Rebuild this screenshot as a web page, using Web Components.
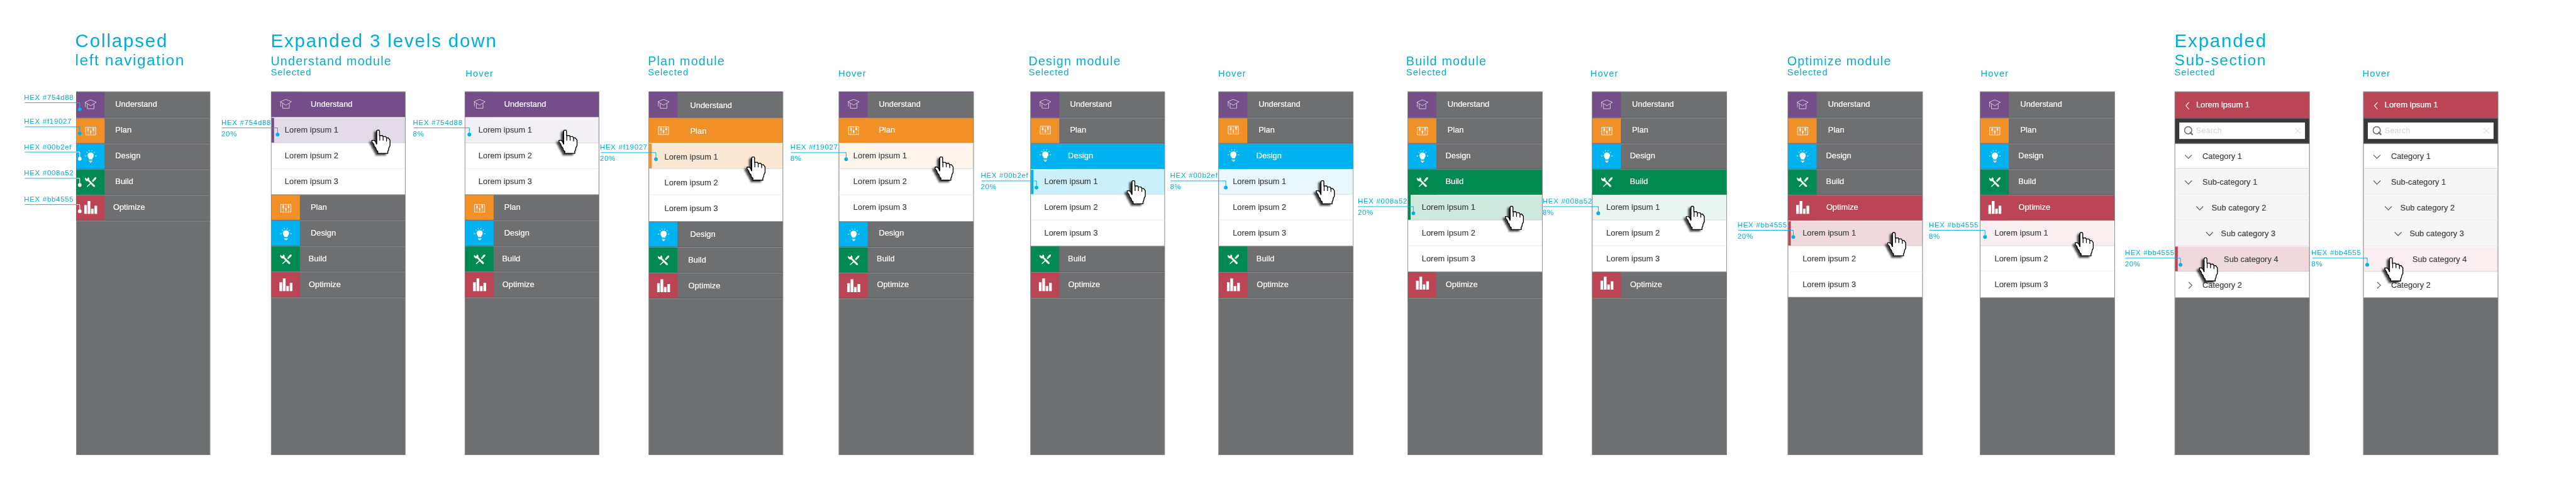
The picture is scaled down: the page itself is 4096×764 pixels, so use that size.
<!DOCTYPE html>
<html lang="en">
<head>
<meta charset="utf-8">
<title>Left navigation states</title>
<style>
  html, body { margin: 0; background: #fff; overflow: hidden; }
  body { width: 4096px; height: 764px; font-family: "Liberation Sans", Arial, Helvetica, sans-serif; }
</style>
</head>
<body>
<spec-board></spec-board>
<script>
const COLORS = { Understand: '#754d88', Plan: '#f19027', Design: '#00b2ef', Build: '#008a52', Optimize: '#bb4555' };
const MODULES = Object.keys(COLORS);

const ICONS = {
  Understand: ['104 70 70 58', '<g fill="none" stroke="#fff" stroke-opacity=".9" stroke-width="2.8"><path d="M107 87 139.500 73 172 87 139.500 107Z"/><path d="M120.500 97V125H159.500V97"/><path d="M109.500 89V115" stroke-width="4" stroke-opacity=".6"/></g>'],
  Plan: ['107 227 66 52', '<g fill="none" stroke="#fff"><path d="M109.500 230.500H169.500V276.500H109.500Z" stroke-width="3.400"/><path d="M125 231V276M140 231V276M155 231V276" stroke-width="2.4" stroke-opacity=".85"/><path d="M117 231V276M163 231V276" stroke-width="2" stroke-opacity=".3"/></g><path fill="#fff" d="M120 238h10v6h-10zM120 246h10v6h-10zM135 252h10v6h-10zM135 260h10v6h-10zM150 236h10v6h-10zM150 244h10v6h-10z"/>'],
  Design: ['103 364 72 76', '<g fill="#fff"><path d="M139 380c-11 0-18 8-18 18 0 9 8 12 9 22h18c1-10 9-13 9-22 0-10-7-18-18-18z"/><path d="M129 428h20v4h-20zM132 434h14l-4 5h-6z"/></g><path d="M105 400h9M164 400h9M116 376l5 7M162 376l-5 7M129 367l2 7M147 367l-2 7" stroke="#fff" stroke-width="3.400"/>'],
  Build: ['103 518 72 64', '<path d="M107 524l7 7 8-1 1-8c8 2 11 9 8 16l32 31c5 6-3 13-9 8l-30-32c-8 2-18-4-19-14z" fill="#fff"/><path d="M116 580l4-8 20-19 4 4-20 18z" fill="#fff"/><path d="M146 544l16-20 10-2-1 10-18 18z" fill="#fff"/><path d="M151 545l15-17" stroke="#008a52" stroke-opacity=".5" stroke-width="2"/>'],
  Optimize: ['101 659 78 78', '<path fill="#fff" d="M102 684h16v52h-16zM122 661h16v75h-16zM142 706h15v30h-15zM162 688h16v48h-16z"/>']
};

function define(name, css, build) {
  customElements.define(name, class extends HTMLElement {
    constructor() {
      super();
      this.attachShadow({ mode: 'open' });
    }
    connectedCallback() {
      const host = this;
      const attr = (key, fallback) => host.hasAttribute(key) ? host.getAttribute(key) : fallback;
      this.shadowRoot.innerHTML = `<style>${css}</style>${build(attr)}`;
    }
  });
}

/* Glyph used in a module's coloured square */
define('module-icon', `
  :host { display: block; }
  svg { display: block; }
`, a => {
  const [box, body] = ICONS[a('name')];
  const [, , w, h] = box.split(' ').map(Number);
  return `<svg viewBox="${box}" width="${w / 3}" height="${h / 3}">${body}</svg>`;
});

/* Top level entry: coloured square with icon, label on the right */
define('module-row', `
  :host { display: block; box-sizing: border-box; height: var(--h); border-top: 1px solid #929395; border-bottom: 1px solid #505153; background: #6e6f71; color: #fff; }
  :host([plain]) { border-top-color: var(--tint); }
  :host([open]) { background: var(--tint); border-bottom-color: #929395; }
  .row { display: flex; height: 100%; }
  .cell { width: 55px; height: 100%; background: var(--tint); flex: none; display: flex; justify-content: center; }
  module-icon { margin-top: var(--iy); margin-left: 1px; height: 0; }
  .label { margin-left: var(--lx); margin-top: var(--ly); height: 0; line-height: 50px; font-size: 15.6px; letter-spacing: .05px; -webkit-text-stroke: .25px currentColor; white-space: nowrap; }
`, a => `<div class="row"><div class="cell"><module-icon name="${a('icon')}"></module-icon></div><div class="label"><slot></slot></div></div>`);

/* Second level entry */
define('sub-row', `
  :host { display: block; box-sizing: border-box; height: var(--h); border-top: 1px solid #fff; border-bottom: 1px solid var(--rule, #fff); background: var(--bg, #fff); color: #3c3d42; }
  .row { display: flex; height: 100%; }
  .bar { width: 5px; flex: none; background: var(--bar, transparent); margin-top: var(--rise, 0px); }
  .mark { margin-left: var(--mx, 0px); width: 0; margin-top: var(--my, 0px); }
  svg { display: block; overflow: visible; }
  .label { margin-left: var(--lx); margin-top: var(--ly); height: 0; line-height: 50px; font-size: 15.6px; letter-spacing: .05px; -webkit-text-stroke: .2px currentColor; white-space: nowrap; }
`, a => {
  const mark = a('mark', '');
  const path = mark === 'down' ? 'M0 0L6.700 6.800L13.300 0' : mark === 'right' ? 'M0 0L6.500 6.300L0 12.600' : '';
  return `<div class="row"><div class="bar"></div><div class="mark">${path ? `<svg width="14" height="14"><path d="${path}" fill="none" stroke="#606163" stroke-width="1.500"/></svg>` : ''}</div><div class="label"><slot></slot></div></div>`;
});

define('back-row', `
  :host { display: block; box-sizing: border-box; height: 51px; background: #bb4555; border-top: 1px solid #929395; border-bottom: 1px solid #86404a; color: #fff; }
  .row { display: flex; }
  svg { display: block; margin: 18.5px 13.6px 0 19.5px; width: 7.500px; height: 15px; }
  .label { line-height: 50px; font-size: 15.6px; letter-spacing: .05px; -webkit-text-stroke: .3px currentColor; height: 48px; }
`, () => `<div class="row"><svg viewBox="0 0 7.500 15"><path d="M7 .400L.900 7.500L7 14.600" fill="none" stroke="#fff" stroke-width="1.400"/></svg><div class="label"><slot></slot></div></div>`);

define('search-row', `
  :host { display: block; box-sizing: border-box; height: 51px; background: #383838; border-top: 1px solid #929395; border-bottom: 2px solid #7c7d7f; padding: 8px 8px 0; }
  .field { height: 32px; background: #fff; display: flex; align-items: center; }
  .glass { margin-left: 9px; width: 18px; height: 18px; }
  .hint { margin-left: 5.500px; font-size: 15.6px; letter-spacing: .05px; color: #d5d6d9; flex: 1; line-height: 32px; }
  .clear { width: 12px; height: 12px; margin-right: 8px; }
`, () => `<div class="field"><svg class="glass" viewBox="0 0 18 18"><circle cx="8.200" cy="8.200" r="7" fill="none" stroke="#6e6f71" stroke-width="2"/><path d="M11.500 11.500L17 17" stroke="#6e6f71" stroke-width="2.800"/></svg><span class="hint"><slot></slot></span><svg class="clear" viewBox="0 0 12 12"><path d="M.300 .300L11.700 11.700M11.700 .300L.300 11.700" stroke="#cfd0d3" stroke-width="1.200"/></svg></div>`);

/* Panel frame; the remaining height is plain grey */
define('nav-panel', `
  :host { display: flex; flex-direction: column; box-sizing: border-box; width: 100%; height: 706px; background: #6e6f71; border: solid #929395; border-width: 0 1px 0 1px; }
  :host([borderless]) { border-left: 0; }
  .rest { flex: 1; border-top: 1px solid #929395; }
`, () => `<slot></slot><div class="rest"></div>`);

/* Title, module name and state above a panel */
define('board-heading', `
  :host { display: flex; flex-direction: column; box-sizing: border-box; height: 178px; padding-top: 58.500px; margin-left: var(--hx); color: #00aedb; white-space: nowrap; width: 0; }
  .title { height: 41.200px; font-size: 36px; line-height: 40px; letter-spacing: 2.250px; }
  .sub { height: 31.700px; font-size: 24px; line-height: 38px; letter-spacing: 1.500px; }
  :host([large]) .sub { font-size: 30px; line-height: 34px; letter-spacing: 1.850px; }
  .state { font-size: 18px; line-height: 20px; letter-spacing: 1.150px; }
  .state.hover { padding-top: 1.400px; letter-spacing: 1.300px; }
`, a => `<div class="title">${a('title-text', '')}</div><div class="sub">${a('sub', '')}</div><div class="state ${a('state') === 'Hover' ? 'hover' : ''}">${a('state', '')}</div>`);

/* Colour annotation: text over a leader line that ends in a dot */
define('color-note', `
  :host { position: absolute; left: var(--x); top: var(--y); width: var(--w); color: #00aedb; font-size: 14px; line-height: 16px; letter-spacing: .86px; white-space: nowrap; }
  .hex { height: 18.300px; }
  .lead { display: block; height: 1px; overflow: visible; margin-left: 1px; }
  .pct { margin-top: 3.200px; }
`, a => {
  const w = +a('w') - 1, split = a('split') ? +a('split') : 0;
  const end = split ? '#fff' : '#00b2ef';
  return `<div class="hex">${a('hex')}</div><svg class="lead" width="${w}" height="1">
    <path d="M0 .500H${split || w}" stroke="#00b2ef" stroke-width="1.200"/>
    <path d="M${split || w - 1} .500H${w}V13" stroke="${end}" stroke-width="1.200" fill="none"/>
    <circle cx="${w}" cy="13.500" r="3.600" fill="${end}"/></svg><div class="pct">${a('pct', '')}</div>`;
});

define('hand-cursor', `
  :host { position: absolute; left: var(--x); top: var(--y); }
  svg { display: block; overflow: visible; filter: drop-shadow(-3.500px 3px 2.200px rgba(0,0,0,.75)); }
`, () => `<svg viewBox="63 36 112 144" width="37.300" height="48"><path d="M97 39H107L110 44V70H127L130 76H146L151 84H161L171 97V130L165 140L162 156L158 162V174H100V162L92 156L88 142L80 134L76 120L66 108V98H78L86 104L93 120V44Z" fill="#fff" stroke="#000" stroke-width="5"/><path d="M93 44V122M111.500 68V99M131 76V99M151 84V104" stroke="#000" stroke-width="4.600" fill="none"/></svg>`);

const BOARDS = [
  { x: 148, r: 408, hx: -2, title: 'Collapsed', sub: 'left navigation', large: 1, lx: 77, bx: 77, ox: 72.500, h: [51, 50, 50, 50, 50], icons: [203, 254.5, 304, 353.500, 402.500], borderless: 1,
    notes: [['#754d88', 199], ['#f19027', 246], ['#00b2ef', 295, 1], ['#008a52', 346, 1], ['#bb4555', 397, 1]], nx: 46.700, ne: 154.500 },
  { x: 526, r: 787, hx: -.6, title: 'Expanded 3 levels down', sub: 'Understand module', open: 0, state: 'Selected', lx: 78.300, short: 3, sx: 28, h: [50, 50, 50, 50, 50, 50, 50, 50], icons: [202, 404.500, 454.300, 504, 552.500], bg: '#e3dce8', nx: 429.700, ne: 538.500, ny: 248, cur: [734, 252] },
  { x: 902, r: 1163, hx: 1.700, open: 0, state: 'Hover', lx: 78, short: 3, sx: 28, h: [50, 50, 50, 50, 50, 50, 50, 50], icons: [202, 404.500, 454.300, 504, 552.500], bg: '#f2f0f5', nx: 801.500, ne: 910.500, ny: 248, cur: [1097, 252] },
  { x: 1258.500, r: 1519.500, hx: -1, sub: 'Plan module', open: 1, state: 'Selected', lx: 82.500, short: 3, sx: 32.500, dy: 2, plain: 1, h: [51, 49, 50, 51, 51, 50, 50, 50], icons: [202, 253.200, 456, 505.700, 554.600], bg: '#fbe8d3', nx: 1164.500, ne: 1272.700, ny: 296, cur: [1462, 304] },
  { x: 1628, r: 1890, hx: -.7, open: 1, state: 'Hover', lx: 79, short: 3, sx: 29.500, plain: 1, h: [51, 49, 50, 51, 51, 50, 50, 50], icons: [202, 253.200, 456, 505.700, 554.600], bg: '#fef5ed', nx: 1534, ne: 1642.300, ny: 296, cur: [1826.600, 304] },
  { x: 1999.500, r: 2261, hx: -3, sub: 'Design module', open: 2, state: 'Selected', lx: 78.600, short: 2, sx: 28.700, h: [51, 50, 50, 49, 50, 50, 51, 50], icons: [201.200, 252.500, 302, 503.600, 552.500], bg: '#ccf0fc', nx: 1903.700, ne: 2011.500, ny: 351, cur: [2200, 350] },
  { x: 2365, r: 2627, hx: -.5, open: 2, state: 'Hover', lx: 79, short: 2, sx: 29, h: [51, 50, 50, 49, 50, 50, 51, 50], icons: [201.200, 252.500, 302, 503.600, 552.500], bg: '#eaf8fe', nx: 2271.200, ne: 2379.500, ny: 351, cur: [2567, 350] },
  { x: 2732, r: 2994, hx: -2.700, sub: 'Build module', open: 3, state: 'Selected', lx: 79, short: 2, sx: 29, h: [51, 50, 50, 50, 49, 50, 50, 51], icons: [203, 254.300, 304, 353.300, 550], bg: '#cde8dd', nx: 2635.400, ne: 2743.700, ny: 401, cur: [2934, 400] },
  { x: 3090, r: 3352, hx: -3, open: 3, state: 'Hover', lx: 79, short: 2, sx: 29, h: [51, 50, 50, 50, 49, 50, 50, 51], icons: [203, 254.300, 304, 353.300, 550], bg: '#eaf4f0', nx: 2994.200, ne: 3102.500, ny: 401, cur: [3284.600, 400] },
  { x: 3470, r: 3732, hx: -1.200, sub: 'Optimize module', open: 4, state: 'Selected', lx: 79.600, short: 2, sx: 30, h: [51, 50, 50, 50, 50, 49, 50, 49], icons: [203, 254.300, 304, 353.500, 402.500], bg: '#f0d9dc', rule2: '#fff', nx: 3372.500, ne: 3480.300, ny: 447, cur: [3676, 451] },
  { x: 3843, r: 4105, hx: 1.700, open: 4, state: 'Hover', lx: 79.600, short: 2, sx: 29.700, h: [51, 50, 50, 50, 50, 49, 49, 51], icons: [203, 254.300, 304, 353.500, 402.500], bg: '#f9eff1', nx: 3743.800, ne: 3852.700, ny: 447, cur: [4039.700, 451] },
  { x: 4221, r: 4483, hx: -.4, title: 'Expanded', sub: 'Sub-section', large: 1, state: 'Selected', tree: 1, selected: 1, bg: '#f0d9dc', nx: 4124.400, ne: 4232.700, ny: 501, cur: [4281, 500] },
  { x: 4587, r: 4849, hx: -1.300, state: 'Hover', tree: 1, bg: '#f9eff1', nx: 4486.500, ne: 4594.300, ny: 501, cur: [4641, 500] }
];

function moduleRows(b) {
  let y = 178, k = 0, out = '';
  MODULES.forEach((name, i) => {
    const h = b.h[k], open = b.open === i;
    const glyph = (b.short !== undefined && i >= b.short) ? b.lx - 4 : (name === 'Optimize' && b.ox) ? b.ox : b.lx;
    const lx = glyph - 1.200 - 55 - (b.borderless ? 0 : 1) + (name === 'Optimize' ? .4 : 0);
    const ih = +ICONS[name][0].split(' ')[3] / 3;
    const ly = 178 + 50 * k + (b.dy || 0) - y - 1;
    out += `<module-row icon="${name}" ${open ? 'open' : ''} ${b.plain && !i ? 'plain' : ''} style="--h:${h}px;--tint:${COLORS[name]};--lx:${lx}px;--ly:${ly}px;--iy:${b.icons[i] - ih / 2 - y - 1}px">${name}</module-row>`;
    y += h; k++;
    if (!open) return;
    for (let n = 1; n < 4; n++) {
      const first = n === 1, selected = first && b.state === 'Selected';
      const rule = first ? '#c0c1c3' : n === 2 ? (b.rule2 || '#e6e7e8') : '#fff';
      out += `<sub-row style="--h:${b.h[k]}px;--rule:${rule};--bg:${first ? b.bg : '#fff'};--lx:${b.sx - 7.200}px;--ly:${178 + 50 * k + (b.dy || 0) - y - 1}px;${selected ? `--bar:${COLORS[name]};` : ''}${selected && i === 3 ? '--rise:-2px;' : ''}">Lorem ipsum ${n}</sub-row>`;
      y += b.h[k]; k++;
    }
  });
  return out;
}

function treeRows(b) {
  const row = (h, text, bg, rule, mark, mx, lx, ly, my, bar) =>
    `<sub-row ${mark ? `mark="${mark}"` : ''} style="--h:${h}px;--bg:${bg};--rule:${rule};--mx:${mx - 6}px;--my:${my}px;--lx:${lx - mx - 1}px;--ly:${ly}px;${bar ? '--bar:#bb4555' : ''}">${text}</sub-row>`;
  return '<back-row>Lorem ipsum 1</back-row><search-row>Search</search-row>'
    + row(48, 'Category 1', '#fff', '#b9babc', 'down', 20, 55, -2, 19.500)
    + row(50, 'Sub-category 1', '#f5f5f5', '#e7e7e8', 'down', 20, 55, 0, 21.500)
    + row(50, 'Sub category 2', '#f5f5f5', '#e7e7e8', 'down', 42.300, 73, 0, 21.500)
    + row(50, 'Sub category 3', '#f5f5f5', '#e7e7e8', 'down', 61, 91, 0, 21.500)
    + row(50, 'Sub category 4', b.bg, '#c0c1c3', '', 61, 96.500, 0, 0, b.selected)
    + row(50, 'Category 2', '#fff', '#fff', 'right', 27.300, 55, 0, 18.500);
}

define('spec-board', `
  :host { display: block; width: 4096px; height: 764px; overflow: hidden; position: relative; background: #fff; }
  .canvas { width: 4990px; height: 930px; position: relative; transform: scale(.8192); transform-origin: 0 0; }
  .boards { display: flex; align-items: flex-start; }
  .board { flex: none; }
`, () => {
  let edge = 0, boards = '', over = '';
  for (const b of BOARDS) {
    boards += `<div class="board" style="width:${b.r - b.x}px;margin-left:${b.x - edge}px"><board-heading style="--hx:${b.hx}px" ${b.large ? 'large' : ''} title-text="${b.title || ''}" sub="${b.sub || ''}" state="${b.state || ''}"></board-heading><nav-panel ${b.borderless ? 'borderless' : ''}>${b.tree ? treeRows(b) : moduleRows(b)}</nav-panel></div>`;
    edge = b.r;
    const hex = b.tree ? '#bb4555' : COLORS[MODULES[b.open]];
    const notes = b.notes || [[hex, b.ny]];
    for (const [color, y, light] of notes) {
      over += `<color-note hex="HEX ${color}" w="${b.ne - b.nx}" ${b.state ? `pct="${b.state === 'Selected' ? '20%' : '8%'}"` : ''} ${light ? 'split="100.3"' : ''} style="--x:${b.nx}px;--y:${y - 18.300}px;--w:${b.ne - b.nx}px"></color-note>`;
    }
    if (b.cur) over += `<hand-cursor style="--x:${b.cur[0] - 13}px;--y:${b.cur[1]}px"></hand-cursor>`;
  }
  return `<div class="canvas"><div class="boards">${boards}</div>${over}</div>`;
});
</script>
</body>
</html>
